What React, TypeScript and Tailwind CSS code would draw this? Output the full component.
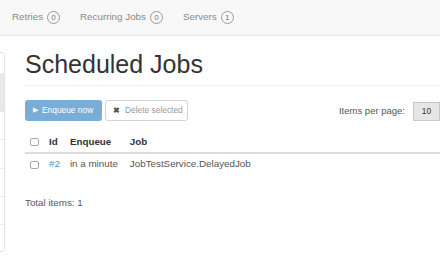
const font = { fontFamily: '"Liberation Sans", Arial, sans-serif' }

function Badge({ n }: { n: number }) {
  return (
    <span className="ml-[4px] inline-flex h-[13px] min-w-[13px] items-center justify-center rounded-full border border-[#9a9a9a] px-[3px] text-[8px] leading-none text-[#777]">
      {n}
    </span>
  )
}

function NavItem({ label, n }: { label: string; n: number }) {
  return (
    <span className="flex items-center text-[9.8px] text-[#8a8a8a]">
      {label}
      <Badge n={n} />
    </span>
  )
}

function Box() {
  return <span className="block h-[8px] w-[9px] rounded-[2px] border border-[#a8a8a8] bg-white" />
}

const sideItems = [
  { h: 'h-[20px]', active: false },
  { h: 'h-[38px]', active: true },
  { h: 'h-[28px]', active: false },
  { h: 'h-[29px]', active: false },
  { h: 'h-[28px]', active: false },
  { h: 'h-[28px]', active: false },
  { h: 'h-[27px]', active: false },
]

export default function App() {
  return (
    <div className="h-[264px] w-[440px] overflow-hidden bg-white" style={font}>
      <nav className="flex h-[36px] items-center gap-[20px] border-b border-[#e7e7e7] bg-[#f8f8f8] pl-[12px]">
        <NavItem label="Retries" n={0} />
        <NavItem label="Recurring Jobs" n={0} />
        <NavItem label="Servers" n={1} />
      </nav>

      <div className="flex">
        <div className="mt-[16px] flex w-[5px] flex-col overflow-hidden rounded-r-[4px] border border-l-0 border-[#e2e2e2]">
          {sideItems.map((s, i) => (
            <div
              key={i}
              className={`${s.h} ${i > 0 ? 'border-t border-[#ececec]' : ''} ${s.active ? 'bg-[#e8e8e8]' : 'bg-white'}`}
            />
          ))}
        </div>

        <main className="ml-[20px] flex-1">
          <h1 className="mt-[15px] h-[27px] text-[25px] leading-[27px] font-normal text-[#333]">Scheduled Jobs</h1>
          <div className="mt-[7px] border-t border-[#eeeeee]" />

          <div className="mt-[14px] flex items-center">
            <button className="flex h-[21px] w-[77px] items-center gap-[4px] rounded-[3px] bg-[#7aadd6] pl-[8px] text-[8.4px] text-white">
              <span className="text-[7px]">▶</span>
              Enqueue now
            </button>
            <button className="ml-[3px] flex h-[21px] w-[83px] items-center gap-[5px] rounded-[3px] border border-[#d4d4d4] bg-white pl-[7px] text-[8.4px] text-[#9a9a9a]">
              <span className="text-[8px] font-bold text-[#555]">✖</span>
              Delete selected
            </button>
            <div className="ml-auto flex items-center">
              <span className="mt-[1px] text-[9.5px] text-[#555]">Items per page:</span>
              <span className="ml-[8px] mt-[2px] flex h-[19px] w-[27px] items-center justify-center border border-[#c8c8c8] bg-[#e6e6e6] text-[8.4px] text-[#333]">
                10
              </span>
            </div>
          </div>

          <table className="mt-[11px] w-full border-collapse text-left text-[9.8px]">
            <thead>
              <tr className="h-[21px] border-b-2 border-[#dddddd] text-[#333]">
                <th className="w-[20px] px-[5px] py-0"><Box /></th>
                <th className="px-[5px] py-0 font-bold">Id</th>
                <th className="pl-[5px] pr-[7px] py-0 font-bold">Enqueue</th>
                <th className="px-[5px] py-0 font-bold">Job</th>
              </tr>
            </thead>
            <tbody>
              <tr className="h-[22px] text-[#555]">
                <td className="px-[5px] py-0"><Box /></td>
                <td className="px-[5px] py-0 text-[#4f8fc7]">#2</td>
                <td className="whitespace-nowrap pl-[5px] pr-[7px] py-0">in a minute</td>
                <td className="w-full px-[5px] py-0">JobTestService.DelayedJob</td>
              </tr>
            </tbody>
          </table>

          <p className="mt-[21px] text-[9.8px] text-[#555]">Total items: 1</p>
        </main>
      </div>
    </div>
  )
}
